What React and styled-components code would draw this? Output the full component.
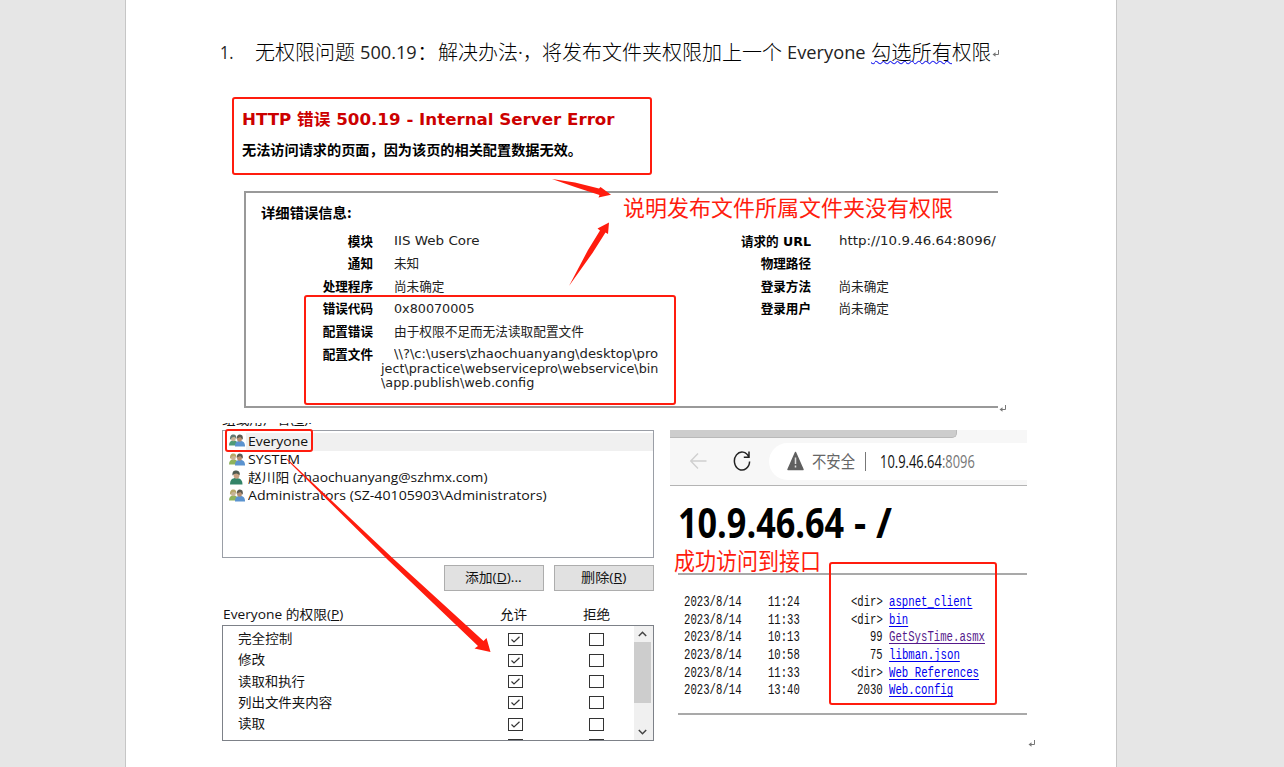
import React, { useLayoutEffect, useRef } from "react";
import styled, { createGlobalStyle } from "styled-components";

const RED = "#ff1c0e";
const VERDANA = `"DejaVu Sans", "Noto Sans CJK SC", sans-serif`;
const SEGOE = `"Open Sans", "Noto Sans CJK SC", sans-serif`;
const CJK = `"Noto Sans CJK SC", sans-serif`;
const MONO = `"Liberation Mono", "Noto Sans CJK SC", monospace`;

const GlobalStyle = createGlobalStyle`
  * { box-sizing: border-box; }
  html, body { margin: 0; background: #e6e6e6; }
`;

/* Text stretched or condensed to a given width */
const FitBox = styled.span`
  display: block;
  flex: none;
  width: ${(p) => p.$w}px;
  white-space: pre;
  text-align: left;
`;
const FitInner = styled.span`
  display: inline-block;
  transform-origin: 0 50%;
`;
function Fit({ w, children, className }) {
  const ref = useRef(null);
  useLayoutEffect(() => {
    const el = ref.current;
    el.style.transform = `scaleX(${w / el.offsetWidth})`;
  }, [w]);
  return (
    <FitBox $w={w} className={className}>
      <FitInner ref={ref}>{children}</FitInner>
    </FitBox>
  );
}

const Desk = styled.div`
  width: 1284px;
  height: 767px;
  overflow: hidden;
  background: #e6e6e6;
  padding-left: 125px;
`;
const Paper = styled.main`
  width: 992px;
  height: 767px;
  background: #fff;
  border-left: 1px solid #c6c6c6;
  border-right: 1px solid #c6c6c6;
  padding: 37px 0 0 94px;
`;

/* Heading line */
const Heading = styled.h1`
  display: flex;
  margin: 0;
  height: 30px;
  font: 400 18.5px/30px ${SEGOE};
  color: #222;
`;
const Num = styled(Fit)`
  margin-right: 22px;
`;
const Han = styled(Fit)`
  font-family: ${CJK};
  font-size: 20px;
  font-weight: 300;
  color: #000;
`;
const Word = styled(Fit)`
  margin-left: ${(p) => p.$gap || 0}px;
  margin-right: ${(p) => p.$after || 0}px;
`;
const Wavy = styled(Han)`
  span {
    text-decoration: underline wavy #2b2bf0 1px;
    text-decoration-skip-ink: none;
    text-underline-offset: 0px;
  }
`;
const MarkSvg = styled.svg`
  display: block;
  flex: none;
  margin: ${(p) => p.$m || "0"};
`;
const ReturnMark = ({ m }) => (
  <MarkSvg $m={m} width="8" height="8" viewBox="0 0 8 8">
    <path d="M6.500 1v4.500H2" fill="none" stroke="#777" strokeWidth="1" />
    <path d="M3.500 3.300v4.400L0.500 5.500z" fill="#777" />
  </MarkSvg>
);

/* IIS error page */
const ErrorShot = styled.section`
  position: relative;
  width: 790px;
  height: 332px;
  padding: 30px 0 0 12px;
`;
const Summary = styled.div`
  width: 420px;
  height: 78px;
  border: 2.5px solid ${RED};
  border-radius: 3px;
  padding: 9px 0 0 8px;
`;
const ErrorTitle = styled(Fit)`
  font: bold 16px/24px ${VERDANA};
  color: #cc0000;
`;
const ErrorSub = styled(Fit)`
  margin-top: 6px;
  font: bold 14px/22px ${CJK};
  color: #000;
`;
const DetailRow = styled.div`
  display: flex;
  align-items: flex-end;
  margin: 16px 0 0 12px;
`;
const Details = styled.div`
  width: 754px;
  height: 217px;
  border: 2px solid #999;
  border-right: 0;
  padding: 8px 0 0 15px;
`;
const DetailsTitle = styled(Fit)`
  font: bold 14px/22px ${CJK};
  color: #000;
`;
const DetailCols = styled.div`
  display: flex;
  margin-top: 7px;
`;
const DetailTable = styled.div`
  display: grid;
  grid-template-columns: ${(p) => p.$cols};
  column-gap: ${(p) => p.$gap}px;
  grid-auto-rows: 22.6px;
  align-content: start;
  font: 12.6px/22.6px ${VERDANA};
  color: #222;
`;
const Label = styled.div`
  padding-top: 0.6px;
  text-align: right;
  font-weight: bold;
  color: #000;
  white-space: nowrap;
`;
const Value = styled.div`
  padding-top: ${(p) => (p.$han ? 0.6 : 0)}px;
  white-space: nowrap;
`;
const PathText = styled.div`
  margin: 4px 0 0 -13px;
  line-height: 14.7px;
`;
const PathFirst = styled(Fit)`
  margin-left: 13px;
`;

const Frame = styled.div`
  position: absolute;
  left: ${(p) => p.$x}px;
  top: ${(p) => p.$y}px;
  width: ${(p) => p.$w}px;
  height: ${(p) => p.$h}px;
  border: 2.5px solid ${RED};
  border-radius: 3px;
`;
const Note = styled(Fit)`
  position: absolute;
  left: ${(p) => p.$x}px;
  top: ${(p) => p.$y}px;
  font: ${(p) => p.$size}px/26px ${CJK};
  color: ${RED};
`;
const ArrowLayer = styled.svg`
  position: absolute;
  left: 0;
  top: 0;
  pointer-events: none;
`;

const Shots = styled.div`
  display: flex;
  align-items: flex-start;
  margin: 20px 0 0 2px;
`;

/* Security dialog */
const PermShot = styled.section`
  position: relative;
  width: 432px;
  height: 324px;
  font: 12.6px/18.3px ${SEGOE};
  color: #111;
`;
const CutLabel = styled.div`
  height: 4px;
  margin-top: 4px;
  overflow: hidden;
  display: flex;
  align-items: flex-end;
  line-height: 14px;
`;
const UserList = styled.div`
  height: 128px;
  margin-top: 3px;
  border: 1px solid #9a9ea6;
  padding-top: 1.6px;
`;
const UserRow = styled.div`
  display: flex;
  align-items: center;
  height: 18.3px;
  padding-left: 6px;
`;
const UserName = styled.div`
  flex: 1;
  height: 18.3px;
  margin-left: 1px;
  padding-left: 2px;
  background: ${(p) => (p.$on ? "#f0f0f0" : "transparent")};
`;
const Buttons = styled.div`
  display: flex;
  justify-content: flex-end;
  gap: 10px;
  margin-top: 7px;
`;
const Button = styled.button`
  display: flex;
  justify-content: center;
  align-items: center;
  width: 100px;
  height: 26px;
  padding: 0 2px 0 0;
  border: 1px solid #adadad;
  background: #e1e1e1;
  font: 12.6px/18px ${SEGOE};
  color: #111;
`;
const PermHead = styled.div`
  display: flex;
  margin-top: 14px;
  height: 20px;
  line-height: 20px;
`;
const PermBox = styled.div`
  display: flex;
  height: 116px;
  border: 1px solid #7d8188;
  overflow: hidden;
`;
const PermRows = styled.div`
  flex: 1;
  min-width: 0;
  padding-top: 2.8px;
`;
const PermRow = styled.div`
  display: flex;
  align-items: center;
  gap: 66px;
  height: 21.2px;
  padding-left: 15px;
`;
const PermName = styled.div`
  width: 204px;
`;
const Check = styled.span`
  display: flex;
  flex: none;
  align-items: center;
  justify-content: center;
  width: 15px;
  height: 13px;
  border: 1px solid #333;
  background: #fff;
`;
const Scroll = styled.div`
  flex: none;
  width: 19px;
  height: 114px;
  background: #f0f0f0;
  display: flex;
  flex-direction: column;
  align-items: center;
  justify-content: space-between;
  padding-right: 2px;
`;
const Thumb = styled.div`
  width: 17px;
  height: 61px;
  margin-bottom: 21px;
  background: #cdcdcd;
`;
const ScrollArrow = styled.svg`
  display: block;
  margin: 5px 0;
`;

/* Browser */
const BrowserShot = styled.section`
  position: relative;
  width: 357px;
  height: 300px;
  margin: 11px 0 0 16px;
`;
const TabStrip = styled.div`
  height: 8px;
  background: #f7f7f7;
`;
const Tab = styled.div`
  width: 287px;
  height: 8px;
  background: #cdcdcd;
  border-radius: 0 0 5px 0;
  border-bottom: 1px solid #b9b9b9;
  border-right: 1px solid #b9b9b9;
`;
const ToolBar = styled.div`
  display: flex;
  align-items: center;
  height: 48px;
  padding: 0 0 1px 20px;
  background: #f7f7f7;
  border-bottom: 1px solid #b4b4b4;
`;
const ReloadSvg = styled.svg`
  margin: 0 18px 0 25px;
`;
const UrlBar = styled.div`
  display: flex;
  align-items: center;
  flex: 1;
  height: 37px;
  padding-left: 18px;
  border-radius: 19px 0 0 19px;
  background: #fff;
  font: 17.5px/36px ${SEGOE};
  color: #111;
`;
const Unsafe = styled(Fit)`
  margin: 0 10px 0 8px;
  font: 17px/36px ${CJK};
  color: #666;
`;
const Bar = styled.i`
  width: 1px;
  height: 19px;
  margin-right: 14px;
  background: #777;
`;
const Port = styled(Fit)`
  color: #777;
`;
const Host = styled.h2`
  display: flex;
  margin: 16px 0 0 8px;
  font: bold 41px/40px ${SEGOE};
  color: #000;
`;
const Rule = styled.hr`
  height: 2px;
  margin: ${(p) => p.$m};
  border: 0;
  background: #a9a9a9;
`;
const Files = styled.div`
  display: grid;
  grid-template-columns: 84px 115px 1fr;
  grid-auto-rows: 17.7px;
  margin: 19px 0 0 14px;
  font: 15.5px/17.7px ${MONO};
  color: #111;
`;
const Size = styled.div`
  display: flex;
`;
const FileLink = styled.a`
  margin-left: 6px;
  color: ${(p) => (p.$seen ? "#551a8b" : "#0000ee")};
`;
const LinkText = styled(Fit)`
  span {
    text-decoration: underline 1px;
    text-decoration-skip-ink: none;
    text-underline-offset: 2px;
  }
`;
const EndMark = styled.div`
  padding: 320px 0 0 1px;
`;

const PeopleSvg = styled.svg`
  flex: none;
  margin-top: -2px;
`;
const People = ({ a, hair, single }) =>
  single ? (
    <PeopleSvg width="16" height="15" viewBox="0 0 16 15">
      <path d="M1 14.500c0-4.500 2-6.500 6-6.500s6.500 2 6.500 6.500z" fill="#338468" />
      <ellipse cx="7.500" cy="5" rx="3" ry="3.700" fill="#c9a384" />
      <path d="M3.500 5.500C3 1.500 5 .3 7.500.5c2.800.3 3.500 2 3.200 4.500C9 4.500 8.500 3.600 7.500 3.500c-1.500.2-3 .7-4 2z" fill="#4f5a50" />
    </PeopleSvg>
  ) : (
    <PeopleSvg width="16" height="13" viewBox="0 0 16 13">
      <path d="M0 11.500c0-3.500 1.500-5 4.500-5S9 8 9 11.500z" fill={a} />
      <ellipse cx="4.300" cy="4.200" rx="2.400" ry="3" fill="#c8b497" />
      <path d="M1 6C.8 1.500 2.500.4 4.500.5 6.800.7 7.600 2 7.400 5L5.500 2.800 3 3.500z" fill={hair} />
      <path d="M6 12.500c0-4 1.500-5.500 5-5.500s5 1.500 5 5.500z" fill="#5b93cf" />
      <ellipse cx="10.500" cy="4.500" rx="2.500" ry="3.200" fill="#b58f72" />
      <path d="M7.800 4.500C7.800 1.500 9 .4 11 .5c2.400.2 3.200 1.700 2.800 5.300L11.300 3z" fill="#5c5a50" />
    </PeopleSvg>
  );

const users = [
  { name: "Everyone", w: 60, on: true, a: "#4f9a76", hair: "#637a74" },
  { name: "SYSTEM", w: 52, a: "#8fb35c", hair: "#b8a868" },
  { name: "赵川阳 (zhaochuanyang@szhmx.com)", w: 240, single: true },
  { name: "Administrators (SZ-40105903\\Administrators)", w: 299, a: "#8fb35c", hair: "#b8a868" },
];
const perms = [
  ["完全控制", 54],
  ["修改", 27],
  ["读取和执行", 67],
  ["列出文件夹内容", 94],
  ["读取", 27],
];
const files = [
  ["11:24", "<dir>", "aspnet_client"],
  ["11:33", "<dir>", "bin"],
  ["10:13", "99", "GetSysTime.asmx"],
  ["10:58", "75", "libman.json"],
  ["11:33", "<dir>", "Web References"],
  ["13:40", "2030", "Web.config"],
];
const CH = 6.42;

export default function App() {
  return (
    <Desk>
      <GlobalStyle />
      <Paper>
        <Heading>
          <Num w={13}>1.</Num>
          <Han w={100}>无权限问题</Han>
          <Word w={57} $gap={5}>500.19</Word>
          <Han w={21}>：</Han>
          <Han w={80}>解决办法</Han>
          <Word w={5}>·</Word>
          <Han w={19}>，</Han>
          <Han w={240}>将发布文件夹权限加上一个</Han>
          <Word w={79} $gap={5} $after={5}>Everyone</Word>
          <Wavy w={81}>勾选所有</Wavy>
          <Han w={39}>权限</Han>
          <ReturnMark m="12px 0 0 1px" />
        </Heading>

        <ErrorShot>
          <Summary>
            <ErrorTitle w={373}>HTTP 错误 500.19 - Internal Server Error</ErrorTitle>
            <ErrorSub w={340}>无法访问请求的页面，因为该页的相关配置数据无效。</ErrorSub>
          </Summary>
          <DetailRow>
            <Details>
              <DetailsTitle w={91}>详细错误信息:</DetailsTitle>
              <DetailCols>
                <DetailTable $cols="112px 330px" $gap={21}>
                  <Label>模块</Label>
                  <Value><Fit w={85.5}>IIS Web Core</Fit></Value>
                  <Label>通知</Label>
                  <Value $han>未知</Value>
                  <Label>处理程序</Label>
                  <Value $han>尚未确定</Value>
                  <Label>错误代码</Label>
                  <Value><Fit w={81}>0x80070005</Fit></Value>
                  <Label>配置错误</Label>
                  <Value $han><Fit w={190}>由于权限不足而无法读取配置文件</Fit></Value>
                  <Label>配置文件</Label>
                  <PathText>
                    <PathFirst w={264}>{"\\\\?\\c:\\users\\zhaochuanyang\\desktop\\pro"}</PathFirst>
                    <Fit w={277}>{"ject\\practice\\webservicepro\\webservice\\bin"}</Fit>
                    <Fit w={153}>{"\\app.publish\\web.config"}</Fit>
                  </PathText>
                </DetailTable>
                <DetailTable $cols="87px 160px" $gap={27.5}>
                  <Label>请求的 URL</Label>
                  <Value><Fit w={156.5}>http://10.9.46.64:8096/</Fit></Value>
                  <Label>物理路径</Label>
                  <Value />
                  <Label>登录方法</Label>
                  <Value $han>尚未确定</Value>
                  <Label>登录用户</Label>
                  <Value $han>尚未确定</Value>
                </DetailTable>
              </DetailCols>
            </Details>
            <ReturnMark m="0 0 -4px 1px" />
          </DetailRow>
          <Frame $x={84} $y={228} $w={372} $h={110} />
          <Note $x={403} $y={126} $size={22} w={330}>说明发布文件所属文件夹没有权限</Note>
          <ArrowLayer width="790" height="332" viewBox="220 67 790 332">
            <path d="M552 179L575 182.500 599 188.500 600.500 187 611 194.700 598.500 197.500 599.500 195 575 187z" fill={RED} />
            <path d="M569 286L588 250 600 230.500 597.500 228.500 609 222.500 608 234 605.500 232.500 592.500 253z" fill={RED} />
          </ArrowLayer>
        </ErrorShot>

        <Shots>
          <PermShot>
            <CutLabel><Fit w={90}>组或用户名(<u>G</u>):</Fit></CutLabel>
            <UserList>
              {users.map((u) => (
                <UserRow key={u.name}>
                  <People {...u} />
                  <UserName $on={u.on}><Fit w={u.w}>{u.name}</Fit></UserName>
                </UserRow>
              ))}
            </UserList>
            <Buttons>
              <Button><Fit w={57}>添加(<u>D</u>)...</Fit></Button>
              <Button><Fit w={45}>删除(<u>R</u>)</Fit></Button>
            </Buttons>
            <PermHead>
              <Word w={120} $gap={1} $after={157}>Everyone 的权限(<u>P</u>)</Word>
              <Word w={27} $after={56}>允许</Word>
              <Word w={27}>拒绝</Word>
            </PermHead>
            <PermBox>
              <PermRows>
                {perms.map(([name, w]) => (
                  <PermRow key={name}>
                    <PermName><Fit w={w}>{name}</Fit></PermName>
                    <Check>
                      <svg width="11" height="9" viewBox="0 0 11 9">
                        <path d="M1.500 4.500L4 7 9.500 1.800" fill="none" stroke="#333" strokeWidth="1.200" />
                      </svg>
                    </Check>
                    <Check />
                  </PermRow>
                ))}
                <PermRow>
                  <PermName />
                  <Check />
                  <Check />
                </PermRow>
              </PermRows>
              <Scroll>
                <ScrollArrow width="9" height="6" viewBox="0 0 9 6">
                  <path d="M.8 5L4.500 1.300 8.200 5" fill="none" stroke="#444" strokeWidth="1.500" />
                </ScrollArrow>
                <Thumb />
                <ScrollArrow width="9" height="6" viewBox="0 0 9 6">
                  <path d="M.8 1L4.500 4.700 8.200 1" fill="none" stroke="#444" strokeWidth="1.500" />
                </ScrollArrow>
              </Scroll>
            </PermBox>
            <Frame $x={3} $y={10} $w={88} $h={23} />
            <ArrowLayer width="432" height="324" viewBox="222 419 432 324">
              <path d="M285.500 458L289 460.500 391.500 557 483.500 641 486.500 638 490.500 652 474.500 648.500 478 646 388.500 560.500 286 459z" fill={RED} />
            </ArrowLayer>
          </PermShot>

          <BrowserShot>
            <TabStrip><Tab /></TabStrip>
            <ToolBar>
              <svg width="18" height="20" viewBox="0 0 18 20">
                <path d="M16.500 10H0.800M8 2.500L0.800 10l7.200 7.500" fill="none" stroke="#d0d0d0" strokeWidth="1.400" />
              </svg>
              <ReloadSvg width="18" height="22" viewBox="0 0 18 22">
                <path d="M15.800 7A7.600 9 0 1 0 16.600 11.500M16 1.500V7.200H10.800" fill="none" stroke="#222" strokeWidth="1.500" />
              </ReloadSvg>
              <UrlBar>
                <svg width="17" height="20" viewBox="0 0 17 20">
                  <path d="M8.500 1.500L16 18.500H1z" fill="#5f5f5f" stroke="#5f5f5f" strokeWidth="1.500" strokeLinejoin="round" />
                  <path d="M8.500 6.500v6.500M8.500 14.500v2" stroke="#ddd" strokeWidth="1.500" />
                </svg>
                <Unsafe w={43}>不安全</Unsafe>
                <Bar />
                <Fit w={62}>10.9.46.64</Fit>
                <Port w={33}>:8096</Port>
              </UrlBar>
            </ToolBar>
            <Host>
              <Fit w={166}>10.9.46.64</Fit>
              <Word w={12} $gap={10} $after={10}>-</Word>
              <Fit w={16}>/</Fit>
            </Host>
            <Rule $m="31px 0 0 8px" />
            <Files>
              {files.map(([time, size, name]) => (
                <React.Fragment key={name}>
                  <Fit w={9 * CH}>2023/8/14</Fit>
                  <Size>
                    <Fit w={5 * CH}>{time}</Fit>
                    <Word w={size.length * CH} $gap={115 - (5 + size.length) * CH}>{size}</Word>
                  </Size>
                  <FileLink $seen={name === "GetSysTime.asmx"}>
                    <LinkText w={name.length * CH}>{name}</LinkText>
                  </FileLink>
                </React.Fragment>
              ))}
            </Files>
            <Rule $m="13px 0 0 8px" />
            <Frame $x={159} $y={131.500} $w={168} $h={143} />
            <Note $x={4} $y={117} $size={24} w={147}>成功访问到接口</Note>
          </BrowserShot>
          <EndMark><ReturnMark /></EndMark>
        </Shots>
      </Paper>
    </Desk>
  );
}
